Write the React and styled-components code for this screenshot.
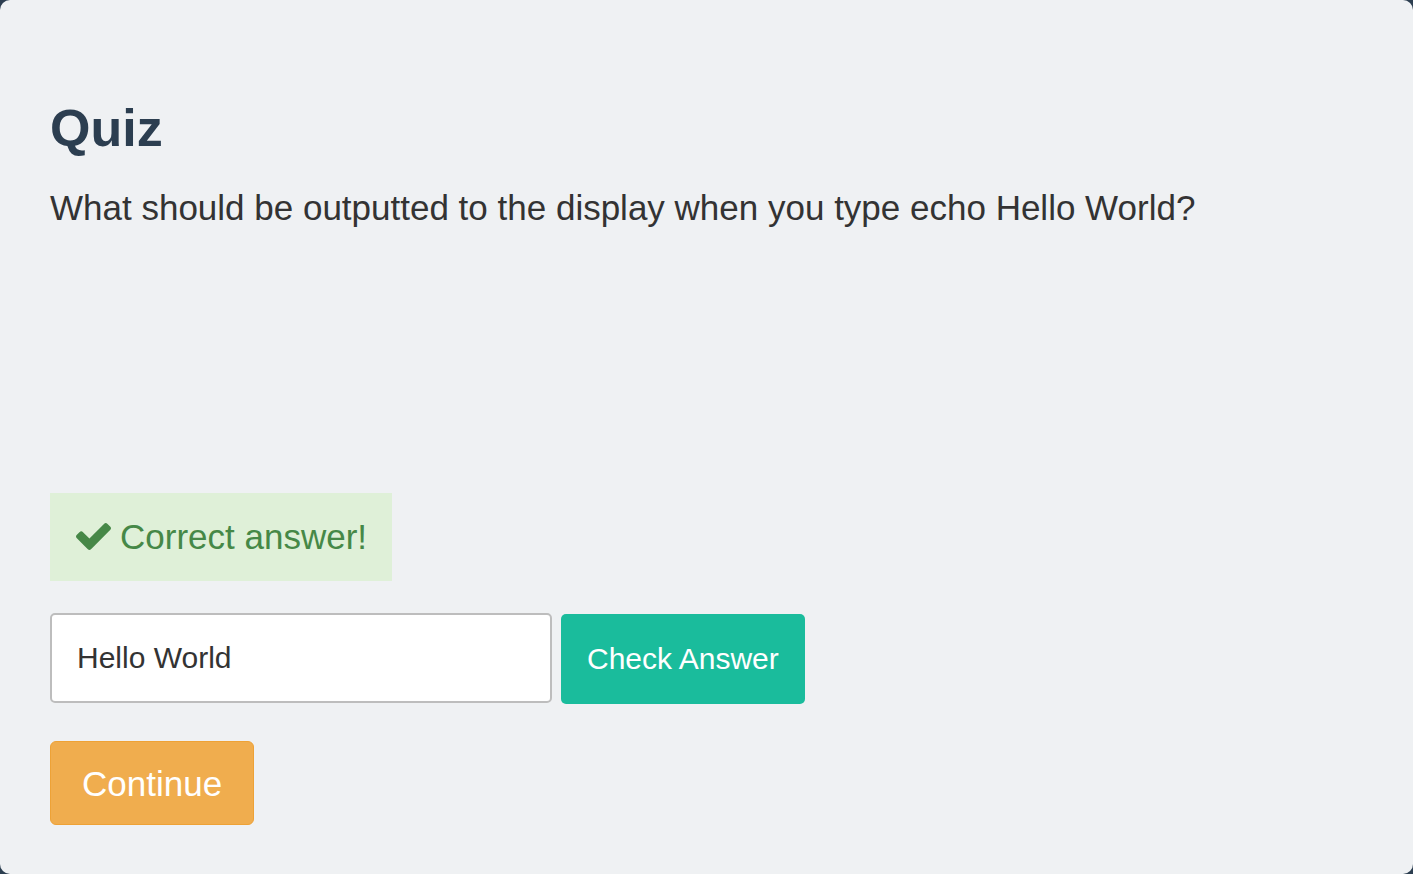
import React from 'react';
import styled, { createGlobalStyle } from 'styled-components';

const GlobalStyle = createGlobalStyle`
  html, body {
    margin: 0;
    padding: 0;
    background-color: #2c3e50;
  }
  * {
    box-sizing: border-box;
  }
`;

const CheckIcon = () => (
  <svg width="35" height="28" viewBox="121 330 1550 1240" fill="currentColor">
    <path d="M1671 566q0 40-28 68l-724 724-136 136q-28 28-68 28t-68-28l-136-136-362-362q-28-28-28-68t28-68l136-136q28-28 68-28t68 28l294 295 656-657q28-28 68-28t68 28l136 136q28 28 28 68z" />
  </svg>
);

const App = () => (
  <>
    <GlobalStyle />
    <Panel>
      <Title>Quiz</Title>
      <Question>What should be outputted to the display when you type echo Hello World?</Question>

      <Alert>
        <CheckIcon />
        <span>Correct answer!</span>
      </Alert>

      <AnswerRow>
        <AnswerInput type="text" defaultValue="Hello World" />
        <Button variant="check">Check Answer</Button>
      </AnswerRow>

      <Button variant="continue">Continue</Button>
    </Panel>
  </>
);

export default App;

// Styled Components

const Panel = styled.div`
  min-height: 100vh;
  background-color: #eff1f3;
  border-radius: 10px;
  padding: 0 50px 40px;
  font-family: 'Liberation Sans', Arial, sans-serif;
  display: flex;
  flex-direction: column;
  align-items: flex-start;
`;

const Title = styled.h1`
  margin: 102px 0 0;
  font-size: 52px;
  line-height: 1;
  font-weight: 700;
  color: #2c3e50;
`;

const Question = styled.p`
  margin: 36px 0 0;
  font-size: 35px;
  line-height: 1;
  color: #333;
`;

const Alert = styled.div`
  margin-top: 268px;
  display: flex;
  align-items: center;
  gap: 9px;
  padding: 26px 25px 26px 26px;
  background-color: #dff0d8;
  color: #468847;
  font-size: 35px;
  line-height: 36px;
`;

const AnswerRow = styled.div`
  margin-top: 32px;
  display: flex;
  align-items: flex-start;
  gap: 9px;
`;

const AnswerInput = styled.input`
  width: 502px;
  height: 90px;
  padding: 0 25px;
  border: 2px solid #bdbdbd;
  border-radius: 5px;
  background-color: #fff;
  color: #333;
  font-family: 'Liberation Sans', Arial, sans-serif;
  font-size: 30px;
  outline: none;
`;

const Button = styled.button`
  font-family: 'Liberation Sans', Arial, sans-serif;
  color: #fff;
  cursor: pointer;
  line-height: 1;

  ${({ variant }) =>
    variant === 'continue'
      ? `
    margin-top: 37px;
    height: 84px;
    padding: 0 31px;
    font-size: 35px;
    background-color: #f0ad4e;
    border: 1px solid #eea236;
    border-radius: 6px;
  `
      : `
    margin-top: 1px;
    height: 90px;
    padding: 0 26px;
    font-size: 30px;
    background-color: #1abc9c;
    border: none;
    border-radius: 5px;
  `}
`;
